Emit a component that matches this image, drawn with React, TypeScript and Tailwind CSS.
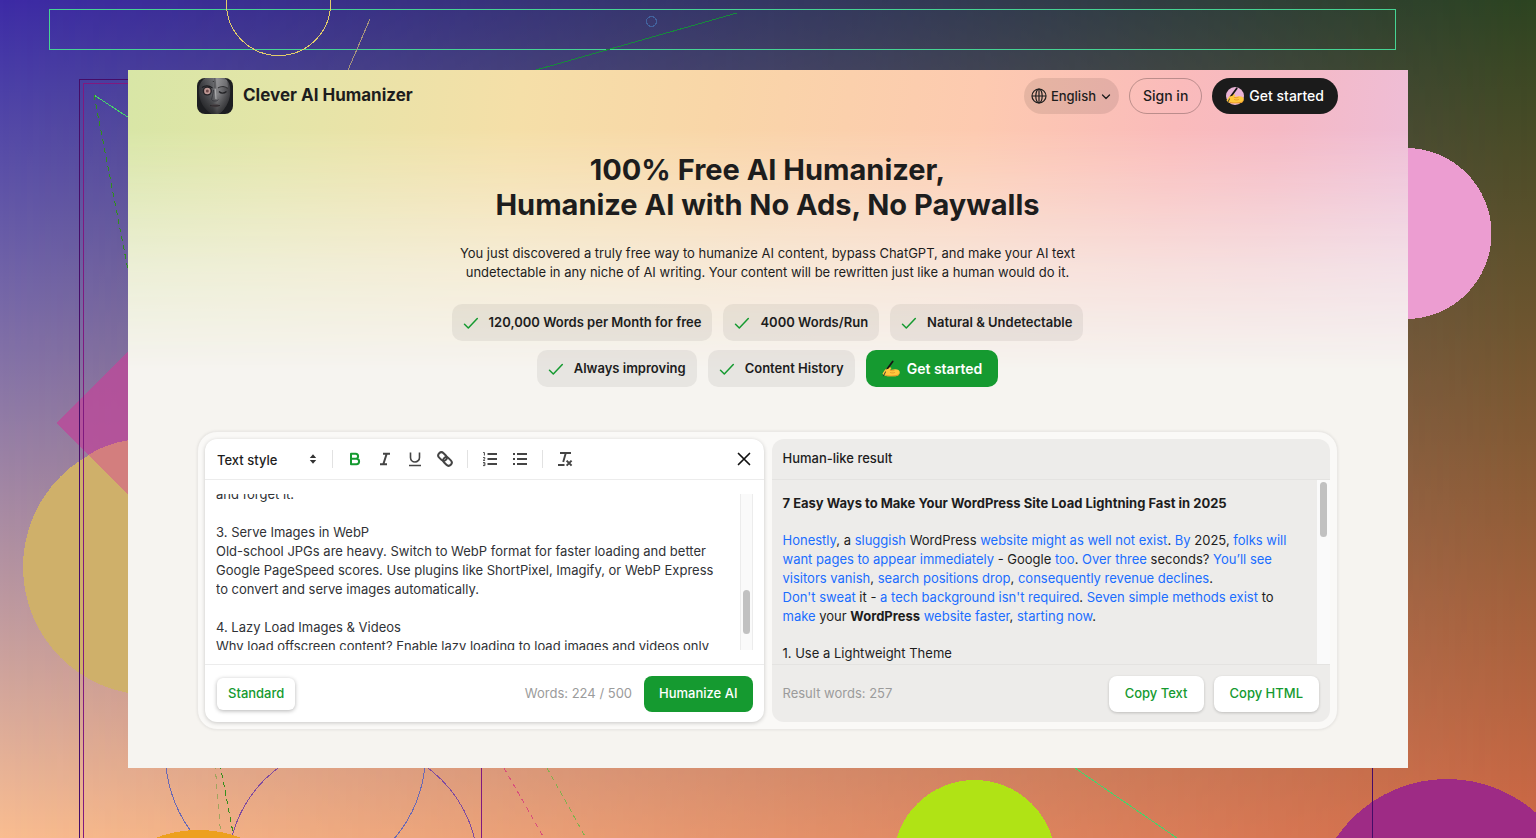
import { useEffect, useRef } from 'react';
import type { ReactNode } from 'react';

function Backdrop() {
  return (
    <div className="absolute inset-0 overflow-hidden bg-linear-to-b from-[#3d2aa6] to-[#f9bd90]" aria-hidden="true">
      <div className="absolute inset-0 bg-linear-to-b from-[#2c4420] to-[#d06846] [mask-image:linear-gradient(to_right,transparent,black)]" />
      <svg className="absolute inset-0 h-full w-full" viewBox="0 0 1536 838" preserveAspectRatio="xMidYMid slice" fill="none" shapeRendering="crispEdges">
        <path d="M56 423 200 279V567Z" fill="#b84c9a" fillOpacity=".85" />
        <circle cx="151" cy="567" r="128" fill="#cfb06a" />
        <path d="M88 455 C101 447 115 442 130 440V497Z" fill="#d37e7e" />
        <circle cx="1406" cy="233.500" r="85.500" fill="#ec9dd1" />
        <path d="M49.500 9.500H1395.500V49.500H49.500Z" stroke="#46d494" />
        <circle cx="278.500" cy="3.500" r="52" stroke="#e3cd6a" />
        <path d="M370 19 348 70" stroke="#a8967c" />
        <path d="M737 13 536 70" stroke="#178a3c" />
        <circle cx="651.500" cy="21.500" r="5" stroke="#42629e" />
        <path d="M79.500 838V79.500H140" stroke="#450c68" />
        <path d="M83.500 838V83.500H140" stroke="#80197f" />
        <path d="M94 95 140 125" stroke="#46d46a" />
        <path d="M94 95 129 275" stroke="#2f8f1c" strokeDasharray="5 4" />
        <circle cx="295.500" cy="754" r="130" stroke="#6a69b4" />
        <circle cx="353" cy="868" r="125" stroke="#7f4ba0" />
        <path d="M215 764 221 838" stroke="#a1a45e" strokeDasharray="5 5" />
        <path d="M220 764 234 838" stroke="#358f1c" strokeDasharray="5 4" />
        <path d="M481.500 768V838" stroke="#80197f" />
        <path d="M504 768 544 838" stroke="#d94f7c" strokeDasharray="5 4" />
        <path d="M547 768 586 838" stroke="#83b04e" strokeDasharray="5 4" />
        <path d="M1075 768 1177 838" stroke="#46d46a" />
        <circle cx="198.500" cy="952" r="122" fill="#eda01f" />
        <circle cx="974.500" cy="861" r="81" fill="#b0e315" />
        <circle cx="1447" cy="913" r="134" fill="#9e2b85" />
        <path d="M1372.500 768V838" stroke="#450c68" />
      </svg>
    </div>
  );
}

function Logo() {
  return (
    <svg className="h-9 w-9" viewBox="0 0 36 36" aria-hidden="true">
      <defs>
        <clipPath id="logo-clip"><rect width="36" height="36" rx="8" /></clipPath>
        <linearGradient id="face" x1="0" y1="0" x2="1" y2="0">
          <stop offset="0" stopColor="#303135" />
          <stop offset=".45" stopColor="#606165" />
          <stop offset=".58" stopColor="#858588" />
          <stop offset="1" stopColor="#3c3c40" />
        </linearGradient>
        <linearGradient id="shade" x1="0" y1="0" x2="0" y2="1">
          <stop offset="0" stopColor="#fff" stopOpacity=".12" />
          <stop offset=".5" stopColor="#000" stopOpacity="0" />
          <stop offset="1" stopColor="#000" stopOpacity=".55" />
        </linearGradient>
      </defs>
      <g clipPath="url(#logo-clip)">
        <rect width="36" height="36" fill="#1d1e21" />
        <path d="M2 9C4 1 11-3 18-3s14 4 15 12c1 9-1 16-6 22-3 4-5 5-9 5s-6-2-9-5C4 26 1 18 2 9Z" fill="url(#face)" />
        <path d="M2 9C4 1 11-3 18-3s14 4 15 12c1 9-1 16-6 22-3 4-5 5-9 5s-6-2-9-5C4 26 1 18 2 9Z" fill="url(#shade)" />
        <path d="M18-1 18 10" stroke="#2c2c30" strokeWidth=".6" />
        <path d="M18 0 30 2 31 9 20 9Z" fill="#a5a5a8" fillOpacity=".3" />
        <path d="M5 9.500C8 7.500 12 7.500 15.500 10" stroke="#1c1c1f" strokeWidth="1.300" fill="none" />
        <path d="M21 10C24 8 28 8 30.500 10.500" stroke="#2e2e31" strokeWidth="1" fill="none" />
        <circle cx="10.300" cy="13" r="4.600" fill="#242226" />
        <circle cx="10.300" cy="13" r="3.200" fill="#c09a96" />
        <circle cx="10.300" cy="13" r="1.500" fill="#6e4a4a" />
        <path d="M22 13.500c2 2 5 2 7.500 0" stroke="#222225" strokeWidth="1.300" fill="none" />
        <path d="M16.500 12C16 17 15 19 14.500 21.500c1 1.500 2 1.500 3.500 1.500s2.500-.2 3.300-1.500" stroke="#38383c" strokeWidth=".9" fill="none" />
        <path d="M18.300 11 19 21" stroke="#a9a9ab" strokeWidth="1.200" />
        <path d="M13 27.500c2-1.300 4-1.600 5-1 1.300-.6 3 0 5 1-3 2.300-7 2.500-10 0Z" fill="#4a4346" />
        <path d="M13 27.500c3 .6 7 .6 10 0" stroke="#1f1c1e" strokeWidth=".7" fill="none" />
        <circle cx="16.300" cy="3.500" r=".6" fill="#202022" />
      </g>
    </svg>
  );
}

function WritingHand({ disc = false }: { disc?: boolean }) {
  return (
    <svg className="h-[18px] w-[18px]" viewBox="0 0 18 18" aria-hidden="true">
      {disc && <circle cx="9" cy="9" r="9" fill="#e9b3d6" />}
      <path d="M.5 13.500C2 11 3.500 8.500 6 7.500c1.500-.7 3-.3 3.500.5L8 10l5-.8c2.500-.2 4.700 1 4.800 2.800.1 2.200-1.600 4.200-4.300 4.200H6C3.500 16.200 1.500 15.500.5 13.500Z" fill="#ffc83d" />
      <path d="M3 14.500c2 1 8 1.300 11.500.6 1.700-.4 2.800-1.500 3.200-2.600 0 2.200-1.900 3.800-4.200 3.800H6c-1.500 0-3-.6-3-1.800Z" fill="#e8942c" />
      <path d="M8 10.200c1.500.7 3 .7 4.200.2M8.500 12.600c1.300.5 2.800.5 4 0" stroke="#e0912a" strokeWidth=".8" fill="none" strokeLinecap="round" />
      <path d="M10.700 1.500 4.800 9.500" stroke="#151515" strokeWidth="1.800" strokeLinecap="round" />
      <path d="M4.800 9.500 1.500 15.800" stroke="#2a2a2a" strokeWidth=".9" strokeLinecap="round" />
      <path d="M2.700 11c1.400-2 3.800-2.900 5.600-1.900.4 1.100-1.200 2.200-3.800 2.900Z" fill="#ffc83d" />
    </svg>
  );
}

function Badge({ children }: { children: ReactNode }) {
  return (
    <li className="flex h-[37px] items-center gap-[10px] rounded-[10px] bg-black/6 px-[11px] text-[13px] font-semibold">
      <svg className="h-4 w-4" viewBox="0 0 16 16" fill="none" aria-hidden="true">
        <path d="M1.500 9.300 5.300 13 14.300 3.500" stroke="#159a30" strokeWidth="1.500" strokeLinecap="round" strokeLinejoin="round" />
      </svg>
      {children}
    </li>
  );
}

function Tool({ label, active = false, children }: { label: string; active?: boolean; children: ReactNode }) {
  return (
    <button type="button" aria-label={label} className={active ? 'flex h-7 w-[30px] items-center justify-center text-[#159a30]' : 'flex h-7 w-[30px] items-center justify-center text-[#444444]'}>
      <svg className="h-4 w-4" viewBox="0 0 16 16" fill="none" stroke="currentColor" aria-hidden="true">
        {children}
      </svg>
    </button>
  );
}

function Divider() {
  return <span className="mx-[7px] h-[18px] w-px bg-[#e2e2e2]" />;
}

function Header() {
  return (
    <header className="flex h-9 items-center justify-between">
      <a href="#" className="flex items-center gap-[10px] text-[17px] font-bold">
        <Logo />
        Clever AI Humanizer
      </a>
      <nav className="flex items-center gap-[10px] text-sm font-medium">
        <button type="button" className="flex h-9 items-center gap-1 rounded-full bg-black/9 px-[7px] text-[13px]">
          <svg className="h-4 w-4" viewBox="0 0 16 16" fill="none" stroke="currentColor" strokeWidth="1.200" aria-hidden="true">
            <circle cx="8" cy="8" r="7" />
            <ellipse cx="8" cy="8" rx="3.200" ry="7" />
            <path d="M1 8h14M8 1v14" />
          </svg>
          English
          <svg className="h-3 w-3" viewBox="0 0 12 12" fill="none" stroke="currentColor" strokeWidth="1.300" strokeLinecap="round" strokeLinejoin="round" aria-hidden="true">
            <path d="M2.500 5 6 8.500 9.500 5" />
          </svg>
        </button>
        <button type="button" className="h-9 rounded-full border border-black/25 px-[13px]">Sign in</button>
        <button type="button" className="flex h-9 items-center gap-[5px] rounded-full bg-[#1b1b1b] px-[14px] text-white">
          <WritingHand disc />
          Get started
        </button>
      </nav>
    </header>
  );
}

function Hero() {
  return (
    <section className="mt-[38px] flex flex-col items-center text-center">
      <h1 className="text-[29px] leading-[35px] font-bold">
        100% Free AI Humanizer,
        <br />
        Humanize AI with No Ads, No Paywalls
      </h1>
      <p className="mt-[22px] text-[13px] leading-[19px]">
        You just discovered a truly free way to humanize AI content, bypass ChatGPT, and make your AI text
        <br />
        undetectable in any niche of AI writing. Your content will be rewritten just like a human would do it.
      </p>
      <ul className="mt-[22px] flex max-w-[660px] flex-wrap justify-center gap-x-[11px] gap-y-[9px]">
        <Badge>120,000 Words per Month for free</Badge>
        <Badge>4000 Words/Run</Badge>
        <Badge>Natural &amp; Undetectable</Badge>
        <Badge>Always improving</Badge>
        <Badge>Content History</Badge>
        <li>
          <button type="button" className="flex h-[37px] items-center gap-[7px] rounded-[10px] bg-[#159a30] px-4 text-sm font-semibold text-white">
            <WritingHand />
            Get started
          </button>
        </li>
      </ul>
    </section>
  );
}

const DRAFT = `and forget it.

3. Serve Images in WebP
Old-school JPGs are heavy. Switch to WebP format for faster loading and better Google PageSpeed scores. Use plugins like ShortPixel, Imagify, or WebP Express to convert and serve images automatically.

4. Lazy Load Images & Videos
Why load offscreen content? Enable lazy loading to load images and videos only`;

function EditorPanel() {
  const box = useRef<HTMLTextAreaElement>(null);
  useEffect(() => {
    if (box.current) box.current.scrollTop = 9;
  }, []);
  return (
    <section className="flex min-w-0 flex-1 flex-col rounded-xl bg-white shadow-[0_1px_4px_rgba(0,0,0,0.2)]">
      <div className="flex h-[41px] items-center border-b border-[#ececec] px-3">
        <div className="relative">
          <select aria-label="Text style" className="w-[102px] appearance-none bg-transparent text-[13px] font-medium">
            <option>Text style</option>
          </select>
          <svg className="pointer-events-none absolute top-[6px] right-0 h-3 w-3" viewBox="0 0 12 12" fill="#333" aria-hidden="true">
            <path d="M6 1.200 9.200 5H2.800ZM6 10.800 9.200 7H2.800Z" />
          </svg>
        </div>
        <span className="mr-[7px] ml-[13px] h-[18px] w-px bg-[#e2e2e2]" />
        <Tool label="Bold" active>
          <path d="M4 2.800H8.600A2.500 2.500 0 0 1 8.600 7.800H4ZM4 7.800H9.400A2.700 2.700 0 0 1 9.400 13.200H4Z" strokeWidth="2" strokeLinejoin="round" />
        </Tool>
        <Tool label="Italic"><path d="M6 2.800h7M3 13.200h7M9.700 2.800 6.300 13.200" strokeWidth="2" /></Tool>
        <Tool label="Underline"><path d="M3.500 1.500V6.500a4.500 4.500 0 0 0 9 0V1.500M2 14.500h12" strokeWidth="1.600" /></Tool>
        <Tool label="Link">
          <g transform="rotate(45 8 8)" strokeWidth="2">
            <rect x="-.2" y="4.900" width="9.400" height="6.200" rx="3.100" />
            <rect x="6.800" y="4.900" width="9.400" height="6.200" rx="3.100" />
          </g>
        </Tool>
        <Divider />
        <Tool label="Numbered list">
          <path d="M5.500 3h9.500M5.500 8h9.500M5.500 13h9.500" strokeWidth="2" />
          <path d="M1.200 1.500h1.200v3M1 6.600h1.800v1.200L1.200 9.400h1.900M1 11.600h1.900v3H1M1.500 13h1.200" strokeWidth="1" />
        </Tool>
        <Tool label="Bulleted list">
          <path d="M5 3h10M5 8h10M5 13h10" strokeWidth="2" />
          <path d="M1 3h2M1 8h2M1 13h2" strokeWidth="2" />
        </Tool>
        <Divider />
        <Tool label="Clear formatting">
          <path d="M3 2h11M8.800 2 6.200 11M1 14h6.500" strokeWidth="1.900" />
          <path d="M9.600 9.600l5 5M14.600 9.600l-5 5" strokeWidth="2" />
        </Tool>
        <button type="button" aria-label="Clear text" className="ml-auto flex h-4 w-4 items-center justify-center">
          <svg className="h-4 w-4" viewBox="0 0 16 16" stroke="#111" strokeWidth="1.700" strokeLinecap="round" aria-hidden="true">
            <path d="M2.500 2.500l11 11M13.500 2.500l-11 11" />
          </svg>
        </button>
      </div>
      <div className="flex h-[184px] px-[11px] py-[14px]">
        <textarea
          ref={box}
          aria-label="Your text"
          defaultValue={DRAFT}
          className="block h-full min-w-0 flex-1 resize-none pr-4 text-[13px] leading-[19px] text-[#303236] outline-none [scrollbar-width:none]"
        />
        <div className="flex w-[13px] flex-col items-center border-x border-[#ececec] bg-[#fafafa] pt-24">
          <span className="h-11 w-[7px] rounded-full bg-[#c1c1c1]" />
        </div>
      </div>
      <div className="flex h-[58px] items-center border-t border-[#ececec] px-[11px]">
        <button type="button" className="ml-px h-8 rounded-md bg-white px-[11px] text-[13px] font-medium text-[#159a30] shadow-[0_1px_4px_rgba(0,0,0,0.3)]">Standard</button>
        <span className="ml-auto text-[13px] text-[#9b9b9b]">Words: 224 / 500</span>
        <button type="button" className="ml-3 h-9 rounded-lg bg-[#159a30] px-[15px] text-[13px] font-medium text-white">Humanize AI</button>
      </div>
    </section>
  );
}

function New({ children }: { children: ReactNode }) {
  return <span className="text-[#1a6dff]">{children}</span>;
}

function ResultPanel() {
  return (
    <section className="flex min-w-0 flex-1 flex-col overflow-hidden rounded-xl bg-[#edecea]">
      <h2 className="flex h-[41px] items-center border-b border-[#e4e3e1] px-[11px] text-[13px] font-medium">Human-like result</h2>
      <div className="flex h-[184px]">
        <div className="flex min-w-0 flex-1 flex-col gap-[18px] overflow-hidden pt-[14px] pr-4 pl-[11px] text-[13px] leading-[19px]">
          <h3 className="font-bold">7 Easy Ways to Make Your WordPress Site Load Lightning Fast in 2025</h3>
          <p>
            <New>Honestly</New>, a <New>sluggish</New> WordPress <New>website might as well not exist</New>. <New>By</New> 2025, <New>folks will want pages to appear immediately</New> - Google <New>too</New>. <New>Over three</New> seconds? <New>You’ll see visitors vanish</New>, <New>search positions drop</New>, <New>consequently revenue declines</New>.
            <br />
            <New>Don't sweat</New> it - <New>a tech background isn't required</New>. <New>Seven simple methods exist</New> to <New>make</New> your <b>WordPress</b> <New>website faster</New>, <New>starting now</New>.
          </p>
          <p>1. Use a Lightweight Theme</p>
        </div>
        <div className="flex w-[13px] flex-col items-center bg-[#fafafa] pt-[2px]">
          <span className="h-[55px] w-[7px] rounded-full bg-[#c1c1c1]" />
        </div>
      </div>
      <div className="flex h-[58px] items-center gap-[10px] border-t border-[#e4e3e1] px-[11px] text-[13px] font-medium text-[#159a30]">
        <span className="mr-auto font-normal text-[#9b9b9b]">Result words: 257</span>
        <button type="button" className="h-9 rounded-lg bg-white px-4 shadow-[0_1px_3px_rgba(0,0,0,0.2)]">Copy Text</button>
        <button type="button" className="h-9 rounded-lg bg-white px-4 shadow-[0_1px_3px_rgba(0,0,0,0.2)]">Copy HTML</button>
      </div>
    </section>
  );
}

export default function App() {
  return (
    <div className="relative min-h-screen px-32 py-[70px] font-['Inter',sans-serif] text-[#1d1d1d]">
      <Backdrop />
      <main className="relative bg-[#f6f4f0] pt-2 pr-[70px] pb-[38px] pl-[69px]">
        <div className="pointer-events-none absolute inset-x-0 top-0 h-[300px] bg-[linear-gradient(97deg,#d8e6a6_0%,#e4e5a8_12%,#f5dfa8_30%,#f9d6a8_45%,#fdcab0_65%,#fabbbb_80%,#f5b9c4_88%,#edbeda_100%)] [mask-image:linear-gradient(to_bottom,black_20%,rgba(0,0,0,0.35)_66%,transparent)]" />
        <div className="relative">
          <Header />
          <Hero />
          <div className="mt-11 flex gap-2 rounded-[20px] border border-[#ebe9e6] bg-[#faf9f7] p-[7px] shadow-[0_0_3px_rgba(0,0,0,0.08)]">
            <EditorPanel />
            <ResultPanel />
          </div>
        </div>
      </main>
    </div>
  );
}
